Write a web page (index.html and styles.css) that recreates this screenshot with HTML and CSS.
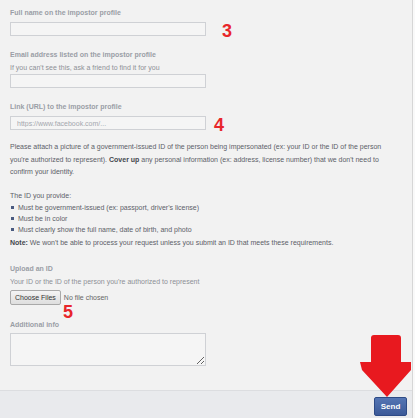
FILE: index.html
```html
<!DOCTYPE html>
<html lang="en">
<head>
    <meta charset="UTF-8">
    <meta name="viewport" content="width=device-width, initial-scale=1.0">
    <title>Report an impostor profile</title>
    <link rel="stylesheet" href="styles.css">
</head>
<body>
    <div class="page">
        <div class="form">
            <div class="field first">
                <div class="label">Full name on the impostor profile</div>
                <div class="row">
                    <input class="text" type="text">
                    <span class="mark mark-3">3</span>
                </div>
            </div>
            <div class="field">
                <div class="label">Email address listed on the impostor profile</div>
                <div class="hint">If you can't see this, ask a friend to find it for you</div>
                <input class="text" type="text">
            </div>
            <div class="field">
                <div class="label">Link (URL) to the impostor profile</div>
                <div class="row">
                    <input class="text" type="text" placeholder="https://www.facebook.com/...">
                    <span class="mark mark-4">4</span>
                </div>
            </div>
            <p class="info">Please attach a picture of a government-issued ID of the person being impersonated (ex: your ID or the ID of the person you're authorized to represent). <b>Cover up</b> any personal information (ex: address, license number) that we don't need to confirm your identity.</p>
            <p class="info list-title">The ID you provide:</p>
            <ul class="reqs">
                <li>Must be government-issued (ex: passport, driver's license)</li>
                <li>Must be in color</li>
                <li>Must clearly show the full name, date of birth, and photo</li>
            </ul>
            <p class="info note"><b>Note:</b> We won't be able to process your request unless you submit an ID that meets these requirements.</p>
            <div class="field upload">
                <div class="label">Upload an ID</div>
                <div class="hint">Your ID or the ID of the person you're authorized to represent</div>
                <div class="file-row">
                    <button class="file-btn" type="button">Choose Files</button>
                    <span class="file-name">No file chosen</span>
                    <span class="mark mark-5">5</span>
                </div>
            </div>
            <div class="field extra">
                <div class="label">Additional info</div>
                <textarea class="area"></textarea>
            </div>
        </div>
        <div class="footer">
            <button class="send" type="button">Send</button>
        </div>
        <svg class="arrow" width="56" height="66" viewBox="358 333 56 66">
            <path d="M371,362 L371,338 Q371,335 374,335 L398,335 Q401,335 401,338 L401,362 L411,362 L411,370 L387,397 L362,370 L360,362 Z" fill="#e8191f"/>
        </svg>
    </div>
</body>
</html>
```

FILE: styles.css
```css
body {
    margin: 0;
    background-color: #f9f9f9;
    font-family: "Liberation Sans", Arial, sans-serif;
}
.page {
    position: relative;
    width: 412px;
    height: 418px;
    background-color: #f2f2f2;
    border-right: 1px solid #d6d6d6;
}
.form {
    height: 390px;
    box-sizing: border-box;
    padding: 8px 0 0 10px;
}
.field {
    margin-top: 14px;
}
.field.first {
    margin-top: 0;
}
.label {
    font-size: 7px;
    line-height: 9px;
    font-weight: bold;
    color: #9a9ea6;
    margin-bottom: 5px;
}
.hint {
    font-size: 7px;
    line-height: 9px;
    color: #8d9096;
    margin: -1px 0 2px;
}
.row {
    position: relative;
    width: 196px;
}
.text {
    display: block;
    box-sizing: border-box;
    width: 196px;
    height: 14px;
    margin: 0;
    padding: 0 6px;
    border: 1px solid #cfd1d5;
    background-color: #f5f5f5;
    font-family: inherit;
    font-size: 7px;
    color: #333;
}
.text::placeholder {
    color: #a4a7ad;
}
.mark {
    position: absolute;
    color: #e8262b;
    font-family: "Liberation Sans", Arial, sans-serif;
    font-size: 18px;
    font-weight: bold;
    line-height: 18px;
}
.mark-3 {
    left: 212px;
    top: 0;
}
.mark-4 {
    left: 204px;
    top: 0;
}
.mark-5 {
    left: 53px;
    top: 13px;
}
.info {
    margin: 11px 0 0;
    width: 388px;
    font-size: 7px;
    line-height: 12.5px;
    color: #5c6068;
}
.info b {
    color: #44474d;
}
.list-title {
    margin-top: 11px;
    line-height: 12px;
}
.reqs {
    margin: 0;
    padding: 0;
    list-style: none;
    font-size: 7px;
    line-height: 11px;
    color: #5c6068;
}
.reqs li {
    position: relative;
    padding-left: 8px;
}
.reqs li::before {
    content: "";
    position: absolute;
    left: 1px;
    top: 4px;
    width: 3px;
    height: 3px;
    background-color: #4a5a80;
}
.note {
    margin-top: 2px;
    line-height: 12px;
}
.field.upload {
    margin-top: 15px;
}
.upload .hint {
    margin-bottom: 4px;
}
.file-row {
    position: relative;
    display: flex;
    align-items: center;
    gap: 3px;
}
.file-btn {
    height: 15px;
    padding: 0 4px;
    border: 1px solid #a9a9a9;
    border-radius: 2px;
    background: linear-gradient(#f4f4f4, #dedede);
    font-family: inherit;
    font-size: 7px;
    color: #333;
}
.file-name {
    font-size: 7px;
    color: #666;
}
.field.extra {
    margin-top: 15px;
}
.extra .label {
    margin-bottom: 4px;
}
.area {
    display: block;
    box-sizing: border-box;
    width: 196px;
    height: 33px;
    margin: 0;
    border: 1px solid #cfd1d5;
    background-color: #f5f5f5;
}
.footer {
    height: 28px;
    box-sizing: border-box;
    border-top: 1px solid #dcdde0;
    background-color: #e9eaed;
    display: flex;
    justify-content: flex-end;
    align-items: flex-start;
    padding: 6px 5px 0 0;
}
.send {
    width: 33px;
    height: 19px;
    padding: 0;
    border: 1px solid #2d4a86;
    border-radius: 2px;
    background: linear-gradient(#5475b4, #3b5998);
    color: #fff;
    font-family: inherit;
    font-size: 8px;
    font-weight: bold;
}
.arrow {
    position: absolute;
    left: 358px;
    top: 333px;
}
```
